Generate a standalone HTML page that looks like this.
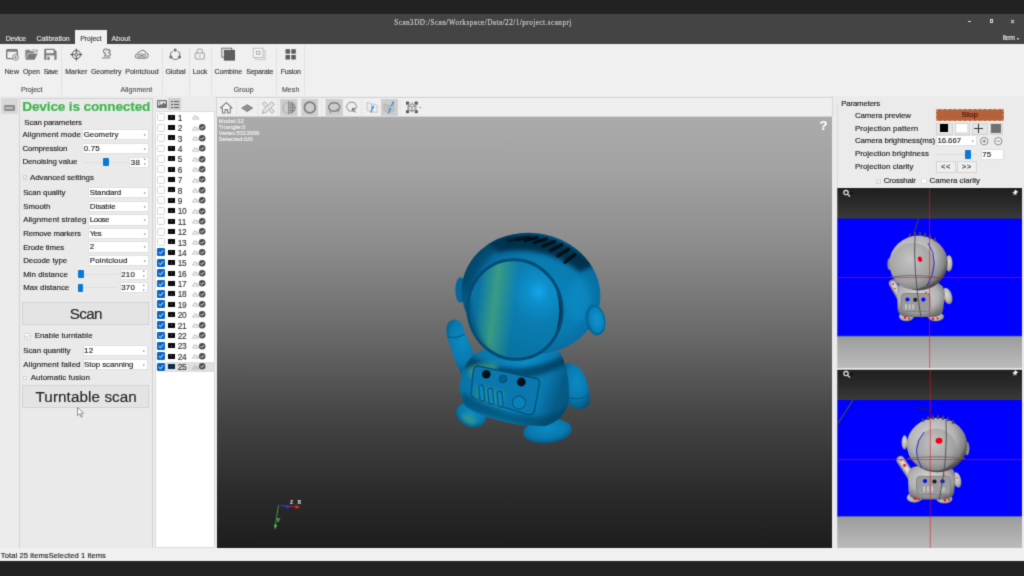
<!DOCTYPE html><html><head><meta charset="utf-8"><title>Scan3D</title><style>
html,body{margin:0;padding:0}
body{width:1024px;height:576px;position:relative;overflow:hidden;background:#ebebeb;font-family:"Liberation Sans",sans-serif;}
.t{position:absolute;white-space:nowrap;-webkit-text-stroke:0.14px;}
.b{position:absolute;box-sizing:border-box;}
.cb{background:#fff;border:1px solid #e0e0e0;}
.btn{background:#e4e4e4;border:1px solid #d2d2d2;}
svg{position:absolute;overflow:visible}
</style></head><body><svg width="0" height="0" style="position:absolute"><defs><filter id="soft" x="0" y="0" width="100%" height="100%" color-interpolation-filters="sRGB"><feConvolveMatrix order="3" kernelMatrix="0.0192 0.1001 0.0192 0.1001 0.5228 0.1001 0.0192 0.1001 0.0192" divisor="1" edgeMode="duplicate" preserveAlpha="true"/></filter></defs></svg><div class="b" style="left:-8px;top:-8px;width:1040px;height:592px;overflow:hidden;background:#ebebeb;filter:url(#soft)"><div class="b" style="left:8px;top:8px;width:1024px;height:576px">
<div class="b " style="left:-8px;top:-8px;width:1040px;height:22px;background:#222"></div>
<div class="b " style="left:-8px;top:14px;width:1040px;height:30.3px;background:#444"></div>
<div class="t " style="left:394.25px;top:19.4px;height:9.4px;line-height:9.4px;font-size:7.2px;color:#cfcfcf;font-family:'Liberation Serif',serif;letter-spacing:0.470px">Scan3DD:/Scan/Workspace/Data/22/1/project.scanprj</div>
<div class="b " style="left:968px;top:21.4px;width:3px;height:1px;background:#dcdcdc"></div>
<div class="b " style="left:989.5px;top:19px;width:3.6px;height:3.6px;border:1px solid #dcdcdc"></div>
<div class="t " style="left:1010.50px;top:16.9px;height:9.1px;line-height:9.1px;font-size:7px;color:#e8e8e8;">&#215;</div>
<div class="b " style="left:75px;top:30px;width:32px;height:15px;background:#f0f0f0"></div>
<div class="t " style="left:5.65px;top:33.5px;height:9.1px;line-height:9.1px;font-size:7px;color:#e6e6e6;letter-spacing:-0.165px">Device</div>
<div class="t " style="left:36.45px;top:33.5px;height:9.1px;line-height:9.1px;font-size:7px;color:#e6e6e6;letter-spacing:-0.026px">Calibration</div>
<div class="t " style="left:80.15px;top:33.5px;height:9.1px;line-height:9.1px;font-size:7px;color:#3a3a3a;letter-spacing:-0.046px">Project</div>
<div class="t " style="left:111.45px;top:33.5px;height:9.1px;line-height:9.1px;font-size:7px;color:#e6e6e6;letter-spacing:0.134px">About</div>
<div class="t " style="left:1002.65px;top:33.6px;height:8.8px;line-height:8.8px;font-size:6.8px;color:#e6e6e6;letter-spacing:-0.291px">Item</div>
<div class="t " style="left:1017.30px;top:35.9px;height:5.2px;line-height:5.2px;font-size:4px;color:#e6e6e6;">&#9662;</div>
<div class="b " style="left:-8px;top:44.3px;width:1040px;height:51.8px;background:#f0f0f0"></div>
<div class="b " style="left:61.3px;top:46px;width:0.9px;height:49px;background:#e2e2e2"></div>
<div class="b " style="left:162.2px;top:46px;width:0.9px;height:49px;background:#e2e2e2"></div>
<div class="b " style="left:189px;top:46px;width:0.9px;height:49px;background:#e2e2e2"></div>
<div class="b " style="left:210.5px;top:46px;width:0.9px;height:49px;background:#e2e2e2"></div>
<div class="b " style="left:276.4px;top:46px;width:0.9px;height:49px;background:#e2e2e2"></div>
<div class="b " style="left:304px;top:46px;width:0.9px;height:49px;background:#e2e2e2"></div>
<div class="t " style="left:4.65px;top:66.9px;height:9.1px;line-height:9.1px;font-size:7px;color:#383838;letter-spacing:0.174px">New</div>
<div class="t " style="left:22.90px;top:66.9px;height:9.1px;line-height:9.1px;font-size:7px;color:#383838;letter-spacing:-0.050px">Open</div>
<div class="t " style="left:43.65px;top:66.9px;height:9.1px;line-height:9.1px;font-size:7px;color:#383838;letter-spacing:-0.505px">Save</div>
<div class="t " style="left:65.15px;top:66.9px;height:9.1px;line-height:9.1px;font-size:7px;color:#383838;letter-spacing:0.076px">Marker</div>
<div class="t " style="left:90.90px;top:66.9px;height:9.1px;line-height:9.1px;font-size:7px;color:#383838;letter-spacing:-0.005px">Geometry</div>
<div class="t " style="left:125.15px;top:66.9px;height:9.1px;line-height:9.1px;font-size:7px;color:#383838;letter-spacing:0.079px">Pointcloud</div>
<div class="t " style="left:165.40px;top:66.9px;height:9.1px;line-height:9.1px;font-size:7px;color:#383838;letter-spacing:-0.034px">Global</div>
<div class="t " style="left:192.75px;top:66.9px;height:9.1px;line-height:9.1px;font-size:7px;color:#383838;letter-spacing:-0.056px">Lock</div>
<div class="t " style="left:214.45px;top:66.9px;height:9.1px;line-height:9.1px;font-size:7px;color:#383838;letter-spacing:-0.033px">Combine</div>
<div class="t " style="left:246.15px;top:66.9px;height:9.1px;line-height:9.1px;font-size:7px;color:#383838;letter-spacing:-0.176px">Separate</div>
<div class="t " style="left:280.65px;top:66.9px;height:9.1px;line-height:9.1px;font-size:7px;color:#383838;letter-spacing:-0.166px">Fusion</div>
<div class="t " style="left:20.90px;top:85.2px;height:9.1px;line-height:9.1px;font-size:7px;color:#505050;letter-spacing:-0.053px">Project</div>
<div class="t " style="left:120.40px;top:85.2px;height:9.1px;line-height:9.1px;font-size:7px;color:#505050;letter-spacing:0.095px">Alignment</div>
<div class="t " style="left:233.65px;top:85.2px;height:9.1px;line-height:9.1px;font-size:7px;color:#505050;letter-spacing:0.162px">Group</div>
<div class="t " style="left:281.90px;top:85.2px;height:9.1px;line-height:9.1px;font-size:7px;color:#505050;letter-spacing:0.093px">Mesh</div>
<svg style="left:0;top:0" width="320" height="96" viewBox="0 0 320 96">
<!-- New -->
<g fill="none" stroke="#7c7c7c">
<rect x="6.7" y="49.6" width="10.6" height="9" rx="1.2" stroke-width="1.4"/>
<path d="M6.7 50.6 h10.6" stroke-width="2.2"/>
</g>
<circle cx="15.6" cy="57.3" r="2.9" fill="#f0f0f0" stroke="#7c7c7c" stroke-width="0.9"/>
<path d="M14 57.3 h3.2 M15.6 55.7 v3.2" stroke="#7c7c7c" stroke-width="0.8"/>
<!-- Open -->
<path d="M25.3 59.6 V50.6 Q25.3 49.8 26.1 49.8 H29.6 L30.8 51.2 H34.2 V53 H28.2 L25.3 59.6Z" fill="#858585"/>
<path d="M28.6 53.6 H37.6 L34.6 59.8 H25.6Z" fill="#7a7a7a"/>
<path d="M31.5 50.2 Q34.8 48.4 37 51.4 M37.3 49.3 L37.1 51.7 L34.9 51.2" fill="none" stroke="#8a8a8a" stroke-width="0.8"/>
<!-- Save -->
<path d="M45.4 48.8 H54 L56.6 51.4 V58.8 Q56.6 60 55.4 60 H45.4 Q44.2 60 44.2 58.8 V50 Q44.2 48.8 45.4 48.8Z" fill="#7e7e7e"/>
<rect x="46.2" y="50" width="7.4" height="3.2" fill="#f0f0f0"/>
<rect x="46.4" y="55.4" width="8" height="4.6" fill="#f0f0f0"/>
<rect x="47.4" y="56.6" width="2.2" height="3.4" fill="#7e7e7e"/>
<!-- Marker -->
<g fill="none" stroke="#4a4a4a" stroke-width="0.95">
<circle cx="76.3" cy="54.6" r="4.2"/><circle cx="76.3" cy="54.6" r="1.5"/>
<path d="M76.3 48.6 V52.6 M76.3 56.6 V60.6 M70.3 54.6 H74.3 M78.3 54.6 H82.3"/>
</g>
<!-- Geometry -->
<path d="M104 49.6 L106.2 48.8 L107 50 L109.2 49.4 L110.2 51.4 L109 52.6 L110.6 54.2 L109.4 56 L104.6 56 L105.6 53.6 L103.4 52 Z" fill="none" stroke="#7a7a7a" stroke-width="1.1"/>
<path d="M102.2 57.6 L110.8 57.2 L109.6 58.4 L101.6 58.6Z" fill="#8a8a8a"/>
<path d="M107.6 52.6 l1.4 0.4" stroke="#8a8a8a" stroke-width="0.8"/>
<!-- Pointcloud -->
<g fill="none" stroke="#6e6e6e" stroke-width="0.95">
<path d="M137.6 58.2 Q135.2 58.2 135.3 55.9 Q135.5 54 137.6 53.9 Q137.9 51.6 140 51.7 Q141 50 143 50.2 Q145.3 50.6 145.6 52.8 Q148.3 52.9 148.3 55.6 Q148.2 58.2 145.8 58.2 Z"/>
<circle cx="139.3" cy="55.8" r="1.5"/><circle cx="144.2" cy="55.8" r="1.5"/><path d="M140.8 55.8 h1.9 M141 53.4 l1.6 1"/>
</g>
<!-- Global -->
<circle cx="175.2" cy="54.8" r="4.7" fill="none" stroke="#6a6a6a" stroke-width="0.95"/>
<g fill="#6a6a6a"><circle cx="175.2" cy="49.9" r="1.5"/><circle cx="170.9" cy="57" r="1.5"/><circle cx="179.5" cy="57" r="1.5"/></g>
<g fill="#f0f0f0"><rect x="172" y="49" width="1.6" height="2"/><rect x="176.8" y="49" width="1.6" height="2"/></g>
<!-- Lock -->
<g fill="none" stroke="#9a9a9a" stroke-width="0.95">
<rect x="195.2" y="53" width="9.2" height="6" rx="0.8"/>
<path d="M197 53 V51.2 Q197 48.9 199.8 48.9 Q202.6 48.9 202.6 51.2 V53"/>
<path d="M198.8 56 h2"/>
</g>
<!-- Combine -->
<rect x="221.8" y="48.2" width="10" height="9" fill="none" stroke="#6a6a6a" stroke-width="0.9"/>
<rect x="224.3" y="50.3" width="10.3" height="9.8" fill="#5e5e5e" stroke="#4a4a4a" stroke-width="0.8"/>
<!-- Separate -->
<rect x="255.6" y="50.6" width="9.6" height="9.2" fill="#e4e4e4" stroke="#c4c4c4" stroke-width="0.8"/>
<rect x="253.2" y="48.2" width="9.8" height="9.2" fill="#f4f4f4" stroke="#b4b4b4" stroke-width="0.8"/>
<rect x="256.6" y="51.3" width="3.4" height="3" fill="none" stroke="#9a9a9a" stroke-width="0.8"/>
<!-- Fusion -->
<g fill="#5c5c5c"><rect x="285.5" y="49.2" width="4.5" height="4.5"/><rect x="291.3" y="49.2" width="4.5" height="4.5"/><rect x="285.5" y="55" width="4.5" height="4.5"/><rect x="291.3" y="55" width="4.5" height="4.5"/></g>
</svg>

<div class="b " style="left:1px;top:98.2px;width:16.7px;height:16.3px;background:#d8d8d8"></div>
<div class="b " style="left:3.8px;top:104.8px;width:11.1px;height:5.9px;background:#8c8c8c;border-radius:1px"></div>
<div class="b " style="left:5.2px;top:107.2px;width:8.3px;height:1.6px;background:#bdbdbd"></div>
<div class="b " style="left:19px;top:98.2px;width:134px;height:450.4px;border:1px solid #d2d2d2;background:#eaeaea"></div>
<div class="t " style="left:22.25px;top:98.1px;height:17px;line-height:17px;font-size:13.7px;color:#3eb54c;font-weight:bold;letter-spacing:-0.190px">Device is connected</div>
<div class="t " style="left:24.35px;top:118.2px;height:10.3px;line-height:10.3px;font-size:7.9px;color:#1c1c1c;letter-spacing:-0.172px">Scan parameters</div>
<div class="t " style="left:22.45px;top:130.3px;height:10.3px;line-height:10.3px;font-size:7.9px;color:#1c1c1c;letter-spacing:0.109px">Alignment mode</div>
<div class="b cb" style="left:82.2px;top:129.3px;width:66.8px;height:11.1px;"></div><div class="t " style="left:83.65px;top:130.2px;height:10.3px;line-height:10.3px;font-size:7.9px;color:#1c1c1c;letter-spacing:0.006px">Geometry</div><div class="t " style="left:143.80px;top:133.1px;height:4.4px;line-height:4.4px;font-size:3.4px;color:#777;">&#9662;</div>
<div class="t " style="left:22.45px;top:143.9px;height:10.3px;line-height:10.3px;font-size:7.9px;color:#1c1c1c;letter-spacing:-0.162px">Compression</div>
<div class="b cb" style="left:82.2px;top:142.8px;width:66.8px;height:11.1px;"></div><div class="t " style="left:83.65px;top:143.7px;height:10.3px;line-height:10.3px;font-size:7.9px;color:#1c1c1c;letter-spacing:0.240px">0.75</div><div class="t " style="left:143.80px;top:146.6px;height:4.4px;line-height:4.4px;font-size:3.4px;color:#777;">&#9662;</div>
<div class="t " style="left:22.45px;top:157.2px;height:10.3px;line-height:10.3px;font-size:7.9px;color:#1c1c1c;letter-spacing:-0.087px">Denoising value</div>
<div class="b " style="left:83px;top:161.7px;width:44.5px;height:1px;background:#dfdfdf"></div><div class="b " style="left:103.4px;top:158.0px;width:5.8px;height:8.4px;background:#0b78d6;border-radius:1px"></div>
<div class="b cb" style="left:129.4px;top:156.7px;width:19.9px;height:11.3px;"></div><div class="t " style="left:130.85px;top:157.7px;height:10.3px;line-height:10.3px;font-size:7.9px;color:#1c1c1c;letter-spacing:0.346px">38</div><div class="t " style="left:144.30px;top:158.1px;height:3.6px;line-height:3.6px;font-size:2.8px;color:#777;">&#9652;</div><div class="t " style="left:144.30px;top:163.1px;height:3.6px;line-height:3.6px;font-size:2.8px;color:#777;">&#9662;</div>
<div class="b " style="left:22.5px;top:175.1px;width:4.6px;height:4.6px;background:#fafafa;border:1px solid #d2d2d2;border-radius:0.6px"></div><svg style="left:22.5px;top:175.1px" width="4.6" height="4.6" viewBox="0 0 10 10"><path d="M2.4 5.2 L4.3 7 L7.6 3.2" stroke="#a8a8a8" stroke-width="1.1" fill="none"/></svg>
<div class="t " style="left:29.95px;top:172.6px;height:10.3px;line-height:10.3px;font-size:7.9px;color:#1c1c1c;letter-spacing:-0.035px">Advanced settings</div>
<div class="t " style="left:23.15px;top:188.2px;height:10.3px;line-height:10.3px;font-size:7.9px;color:#1c1c1c;letter-spacing:-0.052px">Scan quality</div>
<div class="b cb" style="left:88.4px;top:187px;width:60.3px;height:11.2px;"></div><div class="t " style="left:89.85px;top:187.9px;height:10.3px;line-height:10.3px;font-size:7.9px;color:#1c1c1c;letter-spacing:-0.098px">Standard</div><div class="t " style="left:143.50px;top:190.8px;height:4.4px;line-height:4.4px;font-size:3.4px;color:#777;">&#9662;</div>
<div class="t " style="left:23.15px;top:201.8px;height:10.3px;line-height:10.3px;font-size:7.9px;color:#1c1c1c;letter-spacing:0.018px">Smooth</div>
<div class="b cb" style="left:88.4px;top:200.7px;width:60.3px;height:11.2px;"></div><div class="t " style="left:89.85px;top:201.6px;height:10.3px;line-height:10.3px;font-size:7.9px;color:#1c1c1c;letter-spacing:-0.081px">Disable</div><div class="t " style="left:143.50px;top:204.5px;height:4.4px;line-height:4.4px;font-size:3.4px;color:#777;">&#9662;</div>
<div class="t " style="left:23.15px;top:215.4px;height:10.3px;line-height:10.3px;font-size:7.9px;color:#1c1c1c;letter-spacing:0.109px">Alignment strateg</div>
<div class="b cb" style="left:88.4px;top:214.4px;width:60.3px;height:11.2px;"></div><div class="t " style="left:89.85px;top:215.3px;height:10.3px;line-height:10.3px;font-size:7.9px;color:#1c1c1c;letter-spacing:-0.467px">Loose</div><div class="t " style="left:143.50px;top:218.2px;height:4.4px;line-height:4.4px;font-size:3.4px;color:#777;">&#9662;</div>
<div class="t " style="left:23.15px;top:228.9px;height:10.3px;line-height:10.3px;font-size:7.9px;color:#1c1c1c;letter-spacing:-0.176px">Remove markers</div>
<div class="b cb" style="left:88.4px;top:227.8px;width:60.3px;height:11.2px;"></div><div class="t " style="left:89.85px;top:228.8px;height:10.3px;line-height:10.3px;font-size:7.9px;color:#1c1c1c;letter-spacing:-0.510px">Yes</div><div class="t " style="left:143.50px;top:231.6px;height:4.4px;line-height:4.4px;font-size:3.4px;color:#777;">&#9662;</div>
<div class="t " style="left:23.15px;top:242.6px;height:10.3px;line-height:10.3px;font-size:7.9px;color:#1c1c1c;letter-spacing:-0.106px">Erode times</div>
<div class="b cb" style="left:88.4px;top:241.4px;width:60.3px;height:11.2px;"></div><div class="t " style="left:89.85px;top:242.3px;height:10.3px;line-height:10.3px;font-size:7.9px;color:#1c1c1c;letter-spacing:0.309px">2</div><div class="t " style="left:143.50px;top:245.2px;height:4.4px;line-height:4.4px;font-size:3.4px;color:#777;">&#9662;</div>
<div class="t " style="left:23.15px;top:256.1px;height:10.3px;line-height:10.3px;font-size:7.9px;color:#1c1c1c;letter-spacing:-0.020px">Decode type</div>
<div class="b cb" style="left:88.4px;top:255.1px;width:60.3px;height:11.2px;"></div><div class="t " style="left:89.85px;top:256.1px;height:10.3px;line-height:10.3px;font-size:7.9px;color:#1c1c1c;letter-spacing:0.067px">Pointcloud</div><div class="t " style="left:143.50px;top:258.9px;height:4.4px;line-height:4.4px;font-size:3.4px;color:#777;">&#9662;</div>
<div class="t " style="left:23.15px;top:269.8px;height:10.3px;line-height:10.3px;font-size:7.9px;color:#1c1c1c;letter-spacing:0.035px">Min distance</div>
<div class="b " style="left:76px;top:273.8px;width:42px;height:1px;background:#dfdfdf"></div><div class="b " style="left:78.4px;top:270.1px;width:5.8px;height:8.4px;background:#0b78d6;border-radius:1px"></div>
<div class="b cb" style="left:119.9px;top:268.8px;width:28.4px;height:11.2px;"></div><div class="t " style="left:121.35px;top:269.8px;height:10.3px;line-height:10.3px;font-size:7.9px;color:#1c1c1c;letter-spacing:0.131px">210</div><div class="t " style="left:143.30px;top:270.2px;height:3.6px;line-height:3.6px;font-size:2.8px;color:#777;">&#9652;</div><div class="t " style="left:143.30px;top:275.2px;height:3.6px;line-height:3.6px;font-size:2.8px;color:#777;">&#9662;</div>
<div class="t " style="left:23.15px;top:283.1px;height:10.3px;line-height:10.3px;font-size:7.9px;color:#1c1c1c;letter-spacing:-0.035px">Max distance</div>
<div class="b " style="left:76px;top:287.3px;width:42px;height:1px;background:#dfdfdf"></div><div class="b " style="left:77.5px;top:283.6px;width:5.8px;height:8.4px;background:#0b78d6;border-radius:1px"></div>
<div class="b cb" style="left:119.9px;top:282.3px;width:28.4px;height:11.2px;"></div><div class="t " style="left:121.35px;top:283.3px;height:10.3px;line-height:10.3px;font-size:7.9px;color:#1c1c1c;letter-spacing:0.131px">370</div><div class="t " style="left:143.30px;top:283.7px;height:3.6px;line-height:3.6px;font-size:2.8px;color:#777;">&#9652;</div><div class="t " style="left:143.30px;top:288.7px;height:3.6px;line-height:3.6px;font-size:2.8px;color:#777;">&#9662;</div>
<div class="b btn" style="left:22.1px;top:302.2px;width:127.4px;height:22.6px;"></div>
<div class="t " style="left:69.85px;top:303.9px;height:20px;line-height:20px;font-size:15.2px;color:#222;letter-spacing:-0.693px">Scan</div>
<div class="b " style="left:24.2px;top:332.7px;width:7px;height:7px;background:#fafafa;border:1px solid #d2d2d2;border-radius:1.5px"></div><svg style="left:24.2px;top:332.7px" width="7" height="7" viewBox="0 0 10 10"><path d="M2.4 5.2 L4.3 7 L7.6 3.2" stroke="#a8a8a8" stroke-width="1.1" fill="none"/></svg>
<div class="t " style="left:34.65px;top:331.2px;height:10.3px;line-height:10.3px;font-size:7.9px;color:#1c1c1c;letter-spacing:0.027px">Enable turntable</div>
<div class="t " style="left:23.25px;top:345.9px;height:10.3px;line-height:10.3px;font-size:7.9px;color:#1c1c1c;letter-spacing:-0.050px">Scan quantity</div>
<div class="b cb" style="left:82.6px;top:344.8px;width:65.8px;height:11.2px;"></div><div class="t " style="left:84.05px;top:345.8px;height:10.3px;line-height:10.3px;font-size:7.9px;color:#1c1c1c;letter-spacing:0.346px">12</div><div class="t " style="left:143.20px;top:348.6px;height:4.4px;line-height:4.4px;font-size:3.4px;color:#777;">&#9662;</div>
<div class="t " style="left:23.25px;top:359.6px;height:10.3px;line-height:10.3px;font-size:7.9px;color:#1c1c1c;letter-spacing:0.074px">Alignment failed</div>
<div class="b cb" style="left:82.6px;top:358.7px;width:65.8px;height:11.2px;"></div><div class="t " style="left:84.05px;top:359.7px;height:10.3px;line-height:10.3px;font-size:7.9px;color:#1c1c1c;letter-spacing:-0.057px">Stop scanning</div><div class="t " style="left:143.20px;top:362.5px;height:4.4px;line-height:4.4px;font-size:3.4px;color:#777;">&#9662;</div>
<div class="b " style="left:22.8px;top:376.1px;width:4.4px;height:4.4px;background:#fafafa;border:1px solid #d2d2d2;border-radius:0.6px"></div>
<div class="t " style="left:30.65px;top:373.4px;height:10.3px;line-height:10.3px;font-size:7.9px;color:#1c1c1c;letter-spacing:0.062px">Automatic fusion</div>
<div class="b btn" style="left:22.2px;top:385.1px;width:127.3px;height:23px;"></div>
<div class="t " style="left:35.55px;top:386.8px;height:20px;line-height:20px;font-size:15.2px;color:#222;letter-spacing:0.103px">Turntable scan</div>
<svg style="left:77px;top:407.2px" width="8" height="11" viewBox="0 0 8 11"><path d="M0.5 0.5 L0.5 8.5 L2.6 6.8 L4.2 10.2 L5.4 9.6 L3.9 6.4 L6.6 6.2 Z" fill="#fff" stroke="#666" stroke-width="0.7"/></svg>
<div class="b " style="left:156.8px;top:100.1px;width:10.1px;height:7.9px;background:#6c6c6c;border-radius:1.2px"></div>
<svg style="left:0;top:0" width="200" height="120" viewBox="0 0 200 120"><path d="M158 101.3 H165.7 V104.3 L163.4 102.6 L161.4 105 L160.2 104 L158 106Z" fill="#eeeeee"/><circle cx="159.6" cy="102.7" r="0.8" fill="#4a5a6a"/></svg>
<div class="b " style="left:168.3px;top:97.9px;width:13px;height:11.9px;background:#cecece"></div>
<div class="b " style="left:170.8px;top:100.5px;width:2.2px;height:1.5px;background:#5a5a5a"></div>
<div class="b " style="left:174.2px;top:100.5px;width:5.1px;height:1.5px;background:#5a5a5a"></div>
<div class="b " style="left:170.8px;top:103.6px;width:2.2px;height:1.5px;background:#5a5a5a"></div>
<div class="b " style="left:174.2px;top:103.6px;width:5.1px;height:1.5px;background:#5a5a5a"></div>
<div class="b " style="left:170.8px;top:106.7px;width:2.2px;height:1.5px;background:#5a5a5a"></div>
<div class="b " style="left:174.2px;top:106.7px;width:5.1px;height:1.5px;background:#5a5a5a"></div>
<div class="b " style="left:155.3px;top:111px;width:59.5px;height:437px;background:#fff;border:1px solid #dcdcdc"></div>
<div class="b " style="left:157.4px;top:113.35px;width:7.9px;height:7.9px;background:#fdfdfd;border:1px solid #d6d6d6;border-radius:1.5px"></div>
<div class="b " style="left:167.8px;top:114.7px;width:7.1px;height:5px;background:#0a0a0a"></div>
<div class="b " style="left:170.9px;top:116.3px;width:1.4px;height:1.8px;background:#4a4a4a"></div>
<div class="t " style="left:177.85px;top:112.8px;height:10.8px;line-height:10.8px;font-size:8.3px;color:#333;letter-spacing:-0.325px">1</div>
<svg style="left:192px;top:114.3px" width="7.4" height="5.6" viewBox="0 0 16 12"><path d="M1 11 L6 3 L9 8 L11 5 L15 11 Z" fill="none" stroke="#a4a4a4" stroke-width="1.5"/></svg>
<div class="b " style="left:157.4px;top:123.74px;width:7.9px;height:7.9px;background:#fdfdfd;border:1px solid #d6d6d6;border-radius:1.5px"></div>
<div class="b " style="left:167.8px;top:125.09px;width:7.1px;height:5px;background:#0a0a0a"></div>
<div class="b " style="left:170.9px;top:126.69px;width:1.4px;height:1.8px;background:#4a4a4a"></div>
<div class="t " style="left:177.85px;top:123.2px;height:10.8px;line-height:10.8px;font-size:8.3px;color:#333;letter-spacing:-0.325px">2</div>
<svg style="left:192px;top:124.7px" width="7.4" height="5.6" viewBox="0 0 16 12"><path d="M1 11 L6 3 L9 8 L11 5 L15 11 Z" fill="none" stroke="#a4a4a4" stroke-width="1.5"/></svg>
<svg style="left:199.3px;top:124.4px" width="6.4" height="6.4" viewBox="0 0 12 12"><circle cx="6" cy="6" r="6" fill="#4a4a4a"/><path d="M3 6.2 L5.2 8.4 L9 4" stroke="#fff" stroke-width="1.7" fill="none"/></svg>
<div class="b " style="left:157.4px;top:134.13px;width:7.9px;height:7.9px;background:#fdfdfd;border:1px solid #d6d6d6;border-radius:1.5px"></div>
<div class="b " style="left:167.8px;top:135.48px;width:7.1px;height:5px;background:#0a0a0a"></div>
<div class="b " style="left:170.9px;top:137.07999999999998px;width:1.4px;height:1.8px;background:#4a4a4a"></div>
<div class="t " style="left:177.85px;top:133.6px;height:10.8px;line-height:10.8px;font-size:8.3px;color:#333;letter-spacing:-0.325px">3</div>
<svg style="left:192px;top:135.1px" width="7.4" height="5.6" viewBox="0 0 16 12"><path d="M1 11 L6 3 L9 8 L11 5 L15 11 Z" fill="none" stroke="#a4a4a4" stroke-width="1.5"/></svg>
<svg style="left:199.3px;top:134.8px" width="6.4" height="6.4" viewBox="0 0 12 12"><circle cx="6" cy="6" r="6" fill="#4a4a4a"/><path d="M3 6.2 L5.2 8.4 L9 4" stroke="#fff" stroke-width="1.7" fill="none"/></svg>
<div class="b " style="left:157.4px;top:144.52px;width:7.9px;height:7.9px;background:#fdfdfd;border:1px solid #d6d6d6;border-radius:1.5px"></div>
<div class="b " style="left:167.8px;top:145.87px;width:7.1px;height:5px;background:#0a0a0a"></div>
<div class="b " style="left:170.9px;top:147.47px;width:1.4px;height:1.8px;background:#4a4a4a"></div>
<div class="t " style="left:177.85px;top:144.0px;height:10.8px;line-height:10.8px;font-size:8.3px;color:#333;letter-spacing:-0.325px">4</div>
<svg style="left:192px;top:145.5px" width="7.4" height="5.6" viewBox="0 0 16 12"><path d="M1 11 L6 3 L9 8 L11 5 L15 11 Z" fill="none" stroke="#a4a4a4" stroke-width="1.5"/></svg>
<svg style="left:199.3px;top:145.2px" width="6.4" height="6.4" viewBox="0 0 12 12"><circle cx="6" cy="6" r="6" fill="#4a4a4a"/><path d="M3 6.2 L5.2 8.4 L9 4" stroke="#fff" stroke-width="1.7" fill="none"/></svg>
<div class="b " style="left:157.4px;top:154.91000000000003px;width:7.9px;height:7.9px;background:#fdfdfd;border:1px solid #d6d6d6;border-radius:1.5px"></div>
<div class="b " style="left:167.8px;top:156.26000000000002px;width:7.1px;height:5px;background:#0a0a0a"></div>
<div class="b " style="left:170.9px;top:157.86px;width:1.4px;height:1.8px;background:#4a4a4a"></div>
<div class="t " style="left:177.85px;top:154.4px;height:10.8px;line-height:10.8px;font-size:8.3px;color:#333;letter-spacing:-0.325px">5</div>
<svg style="left:192px;top:155.9px" width="7.4" height="5.6" viewBox="0 0 16 12"><path d="M1 11 L6 3 L9 8 L11 5 L15 11 Z" fill="none" stroke="#a4a4a4" stroke-width="1.5"/></svg>
<svg style="left:199.3px;top:155.6px" width="6.4" height="6.4" viewBox="0 0 12 12"><circle cx="6" cy="6" r="6" fill="#4a4a4a"/><path d="M3 6.2 L5.2 8.4 L9 4" stroke="#fff" stroke-width="1.7" fill="none"/></svg>
<div class="b " style="left:157.4px;top:165.3px;width:7.9px;height:7.9px;background:#fdfdfd;border:1px solid #d6d6d6;border-radius:1.5px"></div>
<div class="b " style="left:167.8px;top:166.65px;width:7.1px;height:5px;background:#0a0a0a"></div>
<div class="b " style="left:170.9px;top:168.25px;width:1.4px;height:1.8px;background:#4a4a4a"></div>
<div class="t " style="left:177.85px;top:164.8px;height:10.8px;line-height:10.8px;font-size:8.3px;color:#333;letter-spacing:-0.325px">6</div>
<svg style="left:192px;top:166.2px" width="7.4" height="5.6" viewBox="0 0 16 12"><path d="M1 11 L6 3 L9 8 L11 5 L15 11 Z" fill="none" stroke="#a4a4a4" stroke-width="1.5"/></svg>
<svg style="left:199.3px;top:165.9px" width="6.4" height="6.4" viewBox="0 0 12 12"><circle cx="6" cy="6" r="6" fill="#4a4a4a"/><path d="M3 6.2 L5.2 8.4 L9 4" stroke="#fff" stroke-width="1.7" fill="none"/></svg>
<div class="b " style="left:157.4px;top:175.69px;width:7.9px;height:7.9px;background:#fdfdfd;border:1px solid #d6d6d6;border-radius:1.5px"></div>
<div class="b " style="left:167.8px;top:177.04px;width:7.1px;height:5px;background:#0a0a0a"></div>
<div class="b " style="left:170.9px;top:178.64px;width:1.4px;height:1.8px;background:#4a4a4a"></div>
<div class="t " style="left:177.85px;top:175.1px;height:10.8px;line-height:10.8px;font-size:8.3px;color:#333;letter-spacing:-0.325px">7</div>
<svg style="left:192px;top:176.6px" width="7.4" height="5.6" viewBox="0 0 16 12"><path d="M1 11 L6 3 L9 8 L11 5 L15 11 Z" fill="none" stroke="#a4a4a4" stroke-width="1.5"/></svg>
<svg style="left:199.3px;top:176.3px" width="6.4" height="6.4" viewBox="0 0 12 12"><circle cx="6" cy="6" r="6" fill="#4a4a4a"/><path d="M3 6.2 L5.2 8.4 L9 4" stroke="#fff" stroke-width="1.7" fill="none"/></svg>
<div class="b " style="left:157.4px;top:186.08px;width:7.9px;height:7.9px;background:#fdfdfd;border:1px solid #d6d6d6;border-radius:1.5px"></div>
<div class="b " style="left:167.8px;top:187.43px;width:7.1px;height:5px;background:#0a0a0a"></div>
<div class="b " style="left:170.9px;top:189.03px;width:1.4px;height:1.8px;background:#4a4a4a"></div>
<div class="t " style="left:177.85px;top:185.5px;height:10.8px;line-height:10.8px;font-size:8.3px;color:#333;letter-spacing:-0.325px">8</div>
<svg style="left:192px;top:187.0px" width="7.4" height="5.6" viewBox="0 0 16 12"><path d="M1 11 L6 3 L9 8 L11 5 L15 11 Z" fill="none" stroke="#a4a4a4" stroke-width="1.5"/></svg>
<svg style="left:199.3px;top:186.7px" width="6.4" height="6.4" viewBox="0 0 12 12"><circle cx="6" cy="6" r="6" fill="#4a4a4a"/><path d="M3 6.2 L5.2 8.4 L9 4" stroke="#fff" stroke-width="1.7" fill="none"/></svg>
<div class="b " style="left:157.4px;top:196.47000000000003px;width:7.9px;height:7.9px;background:#fdfdfd;border:1px solid #d6d6d6;border-radius:1.5px"></div>
<div class="b " style="left:167.8px;top:197.82000000000002px;width:7.1px;height:5px;background:#0a0a0a"></div>
<div class="b " style="left:170.9px;top:199.42000000000002px;width:1.4px;height:1.8px;background:#4a4a4a"></div>
<div class="t " style="left:177.85px;top:195.9px;height:10.8px;line-height:10.8px;font-size:8.3px;color:#333;letter-spacing:-0.325px">9</div>
<svg style="left:192px;top:197.4px" width="7.4" height="5.6" viewBox="0 0 16 12"><path d="M1 11 L6 3 L9 8 L11 5 L15 11 Z" fill="none" stroke="#a4a4a4" stroke-width="1.5"/></svg>
<svg style="left:199.3px;top:197.1px" width="6.4" height="6.4" viewBox="0 0 12 12"><circle cx="6" cy="6" r="6" fill="#4a4a4a"/><path d="M3 6.2 L5.2 8.4 L9 4" stroke="#fff" stroke-width="1.7" fill="none"/></svg>
<div class="b " style="left:157.4px;top:206.86px;width:7.9px;height:7.9px;background:#fdfdfd;border:1px solid #d6d6d6;border-radius:1.5px"></div>
<div class="b " style="left:167.8px;top:208.21px;width:7.1px;height:5px;background:#0a0a0a"></div>
<div class="b " style="left:170.9px;top:209.81px;width:1.4px;height:1.8px;background:#4a4a4a"></div>
<div class="t " style="left:177.85px;top:206.3px;height:10.8px;line-height:10.8px;font-size:8.3px;color:#333;letter-spacing:-0.556px">10</div>
<svg style="left:192px;top:207.8px" width="7.4" height="5.6" viewBox="0 0 16 12"><path d="M1 11 L6 3 L9 8 L11 5 L15 11 Z" fill="none" stroke="#a4a4a4" stroke-width="1.5"/></svg>
<svg style="left:199.3px;top:207.5px" width="6.4" height="6.4" viewBox="0 0 12 12"><circle cx="6" cy="6" r="6" fill="#4a4a4a"/><path d="M3 6.2 L5.2 8.4 L9 4" stroke="#fff" stroke-width="1.7" fill="none"/></svg>
<div class="b " style="left:157.4px;top:217.25px;width:7.9px;height:7.9px;background:#fdfdfd;border:1px solid #d6d6d6;border-radius:1.5px"></div>
<div class="b " style="left:167.8px;top:218.6px;width:7.1px;height:5px;background:#0a0a0a"></div>
<div class="b " style="left:170.9px;top:220.2px;width:1.4px;height:1.8px;background:#4a4a4a"></div>
<div class="t " style="left:177.85px;top:216.7px;height:10.8px;line-height:10.8px;font-size:8.3px;color:#333;letter-spacing:-0.150px">11</div>
<svg style="left:192px;top:218.2px" width="7.4" height="5.6" viewBox="0 0 16 12"><path d="M1 11 L6 3 L9 8 L11 5 L15 11 Z" fill="none" stroke="#a4a4a4" stroke-width="1.5"/></svg>
<svg style="left:199.3px;top:217.9px" width="6.4" height="6.4" viewBox="0 0 12 12"><circle cx="6" cy="6" r="6" fill="#4a4a4a"/><path d="M3 6.2 L5.2 8.4 L9 4" stroke="#fff" stroke-width="1.7" fill="none"/></svg>
<div class="b " style="left:157.4px;top:227.64000000000001px;width:7.9px;height:7.9px;background:#fdfdfd;border:1px solid #d6d6d6;border-radius:1.5px"></div>
<div class="b " style="left:167.8px;top:228.99px;width:7.1px;height:5px;background:#0a0a0a"></div>
<div class="b " style="left:170.9px;top:230.59px;width:1.4px;height:1.8px;background:#4a4a4a"></div>
<div class="t " style="left:177.85px;top:227.1px;height:10.8px;line-height:10.8px;font-size:8.3px;color:#333;letter-spacing:-0.556px">12</div>
<svg style="left:192px;top:228.6px" width="7.4" height="5.6" viewBox="0 0 16 12"><path d="M1 11 L6 3 L9 8 L11 5 L15 11 Z" fill="none" stroke="#a4a4a4" stroke-width="1.5"/></svg>
<svg style="left:199.3px;top:228.3px" width="6.4" height="6.4" viewBox="0 0 12 12"><circle cx="6" cy="6" r="6" fill="#4a4a4a"/><path d="M3 6.2 L5.2 8.4 L9 4" stroke="#fff" stroke-width="1.7" fill="none"/></svg>
<div class="b " style="left:157.4px;top:238.03000000000003px;width:7.9px;height:7.9px;background:#fdfdfd;border:1px solid #d6d6d6;border-radius:1.5px"></div>
<div class="b " style="left:167.8px;top:239.38000000000002px;width:7.1px;height:5px;background:#0a0a0a"></div>
<div class="b " style="left:170.9px;top:240.98000000000002px;width:1.4px;height:1.8px;background:#4a4a4a"></div>
<div class="t " style="left:177.85px;top:237.5px;height:10.8px;line-height:10.8px;font-size:8.3px;color:#333;letter-spacing:-0.556px">13</div>
<svg style="left:192px;top:239.0px" width="7.4" height="5.6" viewBox="0 0 16 12"><path d="M1 11 L6 3 L9 8 L11 5 L15 11 Z" fill="none" stroke="#a4a4a4" stroke-width="1.5"/></svg>
<svg style="left:199.3px;top:238.7px" width="6.4" height="6.4" viewBox="0 0 12 12"><circle cx="6" cy="6" r="6" fill="#4a4a4a"/><path d="M3 6.2 L5.2 8.4 L9 4" stroke="#fff" stroke-width="1.7" fill="none"/></svg>
<div class="b " style="left:157.4px;top:248.42000000000002px;width:7.9px;height:7.9px;background:#0b64c4;border-radius:1.2px"></div><svg style="left:157.4px;top:248.42000000000002px" width="7.9" height="7.9" viewBox="0 0 10 10"><path d="M2.2 5.2 L4.3 7.2 L7.9 3" stroke="#fff" stroke-width="1.2" fill="none"/></svg>
<div class="b " style="left:167.8px;top:249.77px;width:7.1px;height:5px;background:#0a0a0a"></div>
<div class="b " style="left:170.9px;top:251.37px;width:1.4px;height:1.8px;background:#4a4a4a"></div>
<div class="t " style="left:177.85px;top:247.9px;height:10.8px;line-height:10.8px;font-size:8.3px;color:#333;letter-spacing:-0.556px">14</div>
<svg style="left:192px;top:249.4px" width="7.4" height="5.6" viewBox="0 0 16 12"><path d="M1 11 L6 3 L9 8 L11 5 L15 11 Z" fill="none" stroke="#a4a4a4" stroke-width="1.5"/></svg>
<svg style="left:199.3px;top:249.1px" width="6.4" height="6.4" viewBox="0 0 12 12"><circle cx="6" cy="6" r="6" fill="#4a4a4a"/><path d="M3 6.2 L5.2 8.4 L9 4" stroke="#fff" stroke-width="1.7" fill="none"/></svg>
<div class="b " style="left:157.4px;top:258.81px;width:7.9px;height:7.9px;background:#0b64c4;border-radius:1.2px"></div><svg style="left:157.4px;top:258.81px" width="7.9" height="7.9" viewBox="0 0 10 10"><path d="M2.2 5.2 L4.3 7.2 L7.9 3" stroke="#fff" stroke-width="1.2" fill="none"/></svg>
<div class="b " style="left:167.8px;top:260.15999999999997px;width:7.1px;height:5px;background:#0a0a0a"></div>
<div class="b " style="left:170.9px;top:261.76px;width:1.4px;height:1.8px;background:#4a4a4a"></div>
<div class="t " style="left:177.85px;top:258.3px;height:10.8px;line-height:10.8px;font-size:8.3px;color:#333;letter-spacing:-0.556px">15</div>
<svg style="left:192px;top:259.8px" width="7.4" height="5.6" viewBox="0 0 16 12"><path d="M1 11 L6 3 L9 8 L11 5 L15 11 Z" fill="none" stroke="#a4a4a4" stroke-width="1.5"/></svg>
<svg style="left:199.3px;top:259.5px" width="6.4" height="6.4" viewBox="0 0 12 12"><circle cx="6" cy="6" r="6" fill="#4a4a4a"/><path d="M3 6.2 L5.2 8.4 L9 4" stroke="#fff" stroke-width="1.7" fill="none"/></svg>
<div class="b " style="left:157.4px;top:269.20000000000005px;width:7.9px;height:7.9px;background:#0b64c4;border-radius:1.2px"></div><svg style="left:157.4px;top:269.20000000000005px" width="7.9" height="7.9" viewBox="0 0 10 10"><path d="M2.2 5.2 L4.3 7.2 L7.9 3" stroke="#fff" stroke-width="1.2" fill="none"/></svg>
<div class="b " style="left:167.8px;top:270.55px;width:7.1px;height:5px;background:#0a0a0a"></div>
<div class="b " style="left:170.9px;top:272.15000000000003px;width:1.4px;height:1.8px;background:#4a4a4a"></div>
<div class="t " style="left:177.85px;top:268.7px;height:10.8px;line-height:10.8px;font-size:8.3px;color:#333;letter-spacing:-0.556px">16</div>
<svg style="left:192px;top:270.2px" width="7.4" height="5.6" viewBox="0 0 16 12"><path d="M1 11 L6 3 L9 8 L11 5 L15 11 Z" fill="none" stroke="#a4a4a4" stroke-width="1.5"/></svg>
<svg style="left:199.3px;top:269.9px" width="6.4" height="6.4" viewBox="0 0 12 12"><circle cx="6" cy="6" r="6" fill="#4a4a4a"/><path d="M3 6.2 L5.2 8.4 L9 4" stroke="#fff" stroke-width="1.7" fill="none"/></svg>
<div class="b " style="left:157.4px;top:279.59000000000003px;width:7.9px;height:7.9px;background:#0b64c4;border-radius:1.2px"></div><svg style="left:157.4px;top:279.59000000000003px" width="7.9" height="7.9" viewBox="0 0 10 10"><path d="M2.2 5.2 L4.3 7.2 L7.9 3" stroke="#fff" stroke-width="1.2" fill="none"/></svg>
<div class="b " style="left:167.8px;top:280.94px;width:7.1px;height:5px;background:#0a0a0a"></div>
<div class="b " style="left:170.9px;top:282.54px;width:1.4px;height:1.8px;background:#4a4a4a"></div>
<div class="t " style="left:177.85px;top:279.0px;height:10.8px;line-height:10.8px;font-size:8.3px;color:#333;letter-spacing:-0.556px">17</div>
<svg style="left:192px;top:280.5px" width="7.4" height="5.6" viewBox="0 0 16 12"><path d="M1 11 L6 3 L9 8 L11 5 L15 11 Z" fill="none" stroke="#a4a4a4" stroke-width="1.5"/></svg>
<svg style="left:199.3px;top:280.2px" width="6.4" height="6.4" viewBox="0 0 12 12"><circle cx="6" cy="6" r="6" fill="#4a4a4a"/><path d="M3 6.2 L5.2 8.4 L9 4" stroke="#fff" stroke-width="1.7" fill="none"/></svg>
<div class="b " style="left:157.4px;top:289.98px;width:7.9px;height:7.9px;background:#0b64c4;border-radius:1.2px"></div><svg style="left:157.4px;top:289.98px" width="7.9" height="7.9" viewBox="0 0 10 10"><path d="M2.2 5.2 L4.3 7.2 L7.9 3" stroke="#fff" stroke-width="1.2" fill="none"/></svg>
<div class="b " style="left:167.8px;top:291.33px;width:7.1px;height:5px;background:#0a0a0a"></div>
<div class="b " style="left:170.9px;top:292.93px;width:1.4px;height:1.8px;background:#4a4a4a"></div>
<div class="t " style="left:177.85px;top:289.4px;height:10.8px;line-height:10.8px;font-size:8.3px;color:#333;letter-spacing:-0.556px">18</div>
<svg style="left:192px;top:290.9px" width="7.4" height="5.6" viewBox="0 0 16 12"><path d="M1 11 L6 3 L9 8 L11 5 L15 11 Z" fill="none" stroke="#a4a4a4" stroke-width="1.5"/></svg>
<svg style="left:199.3px;top:290.6px" width="6.4" height="6.4" viewBox="0 0 12 12"><circle cx="6" cy="6" r="6" fill="#4a4a4a"/><path d="M3 6.2 L5.2 8.4 L9 4" stroke="#fff" stroke-width="1.7" fill="none"/></svg>
<div class="b " style="left:157.4px;top:300.37px;width:7.9px;height:7.9px;background:#0b64c4;border-radius:1.2px"></div><svg style="left:157.4px;top:300.37px" width="7.9" height="7.9" viewBox="0 0 10 10"><path d="M2.2 5.2 L4.3 7.2 L7.9 3" stroke="#fff" stroke-width="1.2" fill="none"/></svg>
<div class="b " style="left:167.8px;top:301.71999999999997px;width:7.1px;height:5px;background:#0a0a0a"></div>
<div class="b " style="left:170.9px;top:303.32px;width:1.4px;height:1.8px;background:#4a4a4a"></div>
<div class="t " style="left:177.85px;top:299.8px;height:10.8px;line-height:10.8px;font-size:8.3px;color:#333;letter-spacing:-0.556px">19</div>
<svg style="left:192px;top:301.3px" width="7.4" height="5.6" viewBox="0 0 16 12"><path d="M1 11 L6 3 L9 8 L11 5 L15 11 Z" fill="none" stroke="#a4a4a4" stroke-width="1.5"/></svg>
<svg style="left:199.3px;top:301.0px" width="6.4" height="6.4" viewBox="0 0 12 12"><circle cx="6" cy="6" r="6" fill="#4a4a4a"/><path d="M3 6.2 L5.2 8.4 L9 4" stroke="#fff" stroke-width="1.7" fill="none"/></svg>
<div class="b " style="left:157.4px;top:310.76000000000005px;width:7.9px;height:7.9px;background:#0b64c4;border-radius:1.2px"></div><svg style="left:157.4px;top:310.76000000000005px" width="7.9" height="7.9" viewBox="0 0 10 10"><path d="M2.2 5.2 L4.3 7.2 L7.9 3" stroke="#fff" stroke-width="1.2" fill="none"/></svg>
<div class="b " style="left:167.8px;top:312.11px;width:7.1px;height:5px;background:#0a0a0a"></div>
<div class="b " style="left:170.9px;top:313.71000000000004px;width:1.4px;height:1.8px;background:#4a4a4a"></div>
<div class="t " style="left:177.85px;top:310.2px;height:10.8px;line-height:10.8px;font-size:8.3px;color:#333;letter-spacing:-0.556px">20</div>
<svg style="left:192px;top:311.7px" width="7.4" height="5.6" viewBox="0 0 16 12"><path d="M1 11 L6 3 L9 8 L11 5 L15 11 Z" fill="none" stroke="#a4a4a4" stroke-width="1.5"/></svg>
<svg style="left:199.3px;top:311.4px" width="6.4" height="6.4" viewBox="0 0 12 12"><circle cx="6" cy="6" r="6" fill="#4a4a4a"/><path d="M3 6.2 L5.2 8.4 L9 4" stroke="#fff" stroke-width="1.7" fill="none"/></svg>
<div class="b " style="left:157.4px;top:321.15000000000003px;width:7.9px;height:7.9px;background:#0b64c4;border-radius:1.2px"></div><svg style="left:157.4px;top:321.15000000000003px" width="7.9" height="7.9" viewBox="0 0 10 10"><path d="M2.2 5.2 L4.3 7.2 L7.9 3" stroke="#fff" stroke-width="1.2" fill="none"/></svg>
<div class="b " style="left:167.8px;top:322.5px;width:7.1px;height:5px;background:#0a0a0a"></div>
<div class="b " style="left:170.9px;top:324.1px;width:1.4px;height:1.8px;background:#4a4a4a"></div>
<div class="t " style="left:177.85px;top:320.6px;height:10.8px;line-height:10.8px;font-size:8.3px;color:#333;letter-spacing:-0.556px">21</div>
<svg style="left:192px;top:322.1px" width="7.4" height="5.6" viewBox="0 0 16 12"><path d="M1 11 L6 3 L9 8 L11 5 L15 11 Z" fill="none" stroke="#a4a4a4" stroke-width="1.5"/></svg>
<svg style="left:199.3px;top:321.8px" width="6.4" height="6.4" viewBox="0 0 12 12"><circle cx="6" cy="6" r="6" fill="#4a4a4a"/><path d="M3 6.2 L5.2 8.4 L9 4" stroke="#fff" stroke-width="1.7" fill="none"/></svg>
<div class="b " style="left:157.4px;top:331.54px;width:7.9px;height:7.9px;background:#0b64c4;border-radius:1.2px"></div><svg style="left:157.4px;top:331.54px" width="7.9" height="7.9" viewBox="0 0 10 10"><path d="M2.2 5.2 L4.3 7.2 L7.9 3" stroke="#fff" stroke-width="1.2" fill="none"/></svg>
<div class="b " style="left:167.8px;top:332.89px;width:7.1px;height:5px;background:#0a0a0a"></div>
<div class="b " style="left:170.9px;top:334.49px;width:1.4px;height:1.8px;background:#4a4a4a"></div>
<div class="t " style="left:177.85px;top:331.0px;height:10.8px;line-height:10.8px;font-size:8.3px;color:#333;letter-spacing:-0.556px">22</div>
<svg style="left:192px;top:332.5px" width="7.4" height="5.6" viewBox="0 0 16 12"><path d="M1 11 L6 3 L9 8 L11 5 L15 11 Z" fill="none" stroke="#a4a4a4" stroke-width="1.5"/></svg>
<svg style="left:199.3px;top:332.2px" width="6.4" height="6.4" viewBox="0 0 12 12"><circle cx="6" cy="6" r="6" fill="#4a4a4a"/><path d="M3 6.2 L5.2 8.4 L9 4" stroke="#fff" stroke-width="1.7" fill="none"/></svg>
<div class="b " style="left:157.4px;top:341.93px;width:7.9px;height:7.9px;background:#0b64c4;border-radius:1.2px"></div><svg style="left:157.4px;top:341.93px" width="7.9" height="7.9" viewBox="0 0 10 10"><path d="M2.2 5.2 L4.3 7.2 L7.9 3" stroke="#fff" stroke-width="1.2" fill="none"/></svg>
<div class="b " style="left:167.8px;top:343.28px;width:7.1px;height:5px;background:#0a0a0a"></div>
<div class="b " style="left:170.9px;top:344.88px;width:1.4px;height:1.8px;background:#4a4a4a"></div>
<div class="t " style="left:177.85px;top:341.4px;height:10.8px;line-height:10.8px;font-size:8.3px;color:#333;letter-spacing:-0.556px">23</div>
<svg style="left:192px;top:342.9px" width="7.4" height="5.6" viewBox="0 0 16 12"><path d="M1 11 L6 3 L9 8 L11 5 L15 11 Z" fill="none" stroke="#a4a4a4" stroke-width="1.5"/></svg>
<svg style="left:199.3px;top:342.6px" width="6.4" height="6.4" viewBox="0 0 12 12"><circle cx="6" cy="6" r="6" fill="#4a4a4a"/><path d="M3 6.2 L5.2 8.4 L9 4" stroke="#fff" stroke-width="1.7" fill="none"/></svg>
<div class="b " style="left:157.4px;top:352.32000000000005px;width:7.9px;height:7.9px;background:#0b64c4;border-radius:1.2px"></div><svg style="left:157.4px;top:352.32000000000005px" width="7.9" height="7.9" viewBox="0 0 10 10"><path d="M2.2 5.2 L4.3 7.2 L7.9 3" stroke="#fff" stroke-width="1.2" fill="none"/></svg>
<div class="b " style="left:167.8px;top:353.67px;width:7.1px;height:5px;background:#0a0a0a"></div>
<div class="b " style="left:170.9px;top:355.27000000000004px;width:1.4px;height:1.8px;background:#4a4a4a"></div>
<div class="t " style="left:177.85px;top:351.8px;height:10.8px;line-height:10.8px;font-size:8.3px;color:#333;letter-spacing:-0.556px">24</div>
<svg style="left:192px;top:353.3px" width="7.4" height="5.6" viewBox="0 0 16 12"><path d="M1 11 L6 3 L9 8 L11 5 L15 11 Z" fill="none" stroke="#a4a4a4" stroke-width="1.5"/></svg>
<svg style="left:199.3px;top:353.0px" width="6.4" height="6.4" viewBox="0 0 12 12"><circle cx="6" cy="6" r="6" fill="#4a4a4a"/><path d="M3 6.2 L5.2 8.4 L9 4" stroke="#fff" stroke-width="1.7" fill="none"/></svg>
<div class="b " style="left:165px;top:361.76000000000005px;width:48.6px;height:9.9px;background:#dfdfdf"></div>
<div class="b " style="left:157.4px;top:362.71000000000004px;width:7.9px;height:7.9px;background:#0b64c4;border-radius:1.2px"></div><svg style="left:157.4px;top:362.71000000000004px" width="7.9" height="7.9" viewBox="0 0 10 10"><path d="M2.2 5.2 L4.3 7.2 L7.9 3" stroke="#fff" stroke-width="1.2" fill="none"/></svg>
<div class="b " style="left:167.8px;top:364.06px;width:7.1px;height:5px;background:#0a2a44"></div>
<div class="b " style="left:170.9px;top:365.66px;width:1.4px;height:1.8px;background:#4a4a4a"></div>
<div class="t " style="left:177.85px;top:362.2px;height:10.8px;line-height:10.8px;font-size:8.3px;color:#333;letter-spacing:-0.556px">25</div>
<svg style="left:192px;top:363.7px" width="7.4" height="5.6" viewBox="0 0 16 12"><path d="M1 11 L6 3 L9 8 L11 5 L15 11 Z" fill="none" stroke="#a4a4a4" stroke-width="1.5"/></svg>
<svg style="left:199.3px;top:363.4px" width="6.4" height="6.4" viewBox="0 0 12 12"><circle cx="6" cy="6" r="6" fill="#4a4a4a"/><path d="M3 6.2 L5.2 8.4 L9 4" stroke="#fff" stroke-width="1.7" fill="none"/></svg>
<div class="b " style="left:216.3px;top:97px;width:617.2px;height:20px;background:#efefef;border:1px solid #d4d4d4"></div>
<svg style="left:0;top:0" width="440" height="120" viewBox="0 0 440 120">
<g fill="#cdcdcd"><rect x="280.2" y="99" width="17.2" height="16.8"/><rect x="301.3" y="99" width="16.8" height="16.8"/><rect x="325.6" y="99" width="17.2" height="16.8"/><rect x="381" y="99" width="17" height="16.8"/></g>
<g stroke="#d4d4d4" stroke-width="0.8" stroke-dasharray="1 1"><path d="M236.8 100 V115"/><path d="M258 100 V115"/><path d="M278 100 V115"/><path d="M321.5 100 V115"/><path d="M361.6 100 V115"/><path d="M400 100 V115"/></g>
<!-- home -->
<path d="M220.6 108 L226.3 102.6 L232 108 H230.2 V113 H227.6 V109.6 H225 V113 H222.4 V108Z" fill="#f4f4f4" stroke="#7a7a7a" stroke-width="1.05" stroke-linejoin="round"/>
<!-- layers -->
<path d="M241 108 L247.2 104.2 L253.3 108 L247.2 112 Z" fill="#7a7a7a"/>
<path d="M243 106.8 L249.2 110.7 M245 105.5 L251.2 109.4 M251.2 106.7 L245 110.6 M249.2 105.4 L243 109.4" stroke="#b4b4b4" stroke-width="0.5"/>
<!-- cross tools -->
<g stroke="#a4a4a4" fill="#e6e6e6" stroke-width="0.9"><path d="M262.4 104 L264.6 101.8 L274.4 111.2 L272.2 113.4Z"/><path d="M271.8 101.7 L274.4 104.2 L266 112.4 L262.4 113.4 L263.4 109.8Z"/></g>
<!-- mirror/half -->
<g stroke="#7c7c7c" stroke-width="0.9" fill="none"><path d="M288.6 101 V114.4"/><path d="M290.2 102.2 Q295.4 103.6 295.2 107.8 Q295 112 290.2 113.2Z" fill="#bdbdbd"/><path d="M290.2 105 H294.6 M290.2 107.6 H295.2 M290.2 110.4 H294.6 M292.6 102.8 V112.6"/><path d="M287 102.4 Q283 104 283 107.8 Q283.2 111.6 287 113" stroke-dasharray="1.2 1"/></g>
<!-- ring -->
<circle cx="309.8" cy="107.5" r="5.4" fill="none" stroke="#7c7c7c" stroke-width="1.7"/>
<!-- lasso -->
<g fill="none" stroke="#7c7c7c" stroke-width="1.35"><ellipse cx="334.2" cy="107" rx="5.6" ry="4.3"/><path d="M330.4 110 Q329.2 112.4 331 113.4 M336.6 108.6 l2.2 3.4" stroke-width="0.9"/></g>
<!-- poly lasso -->
<g fill="none" stroke="#8a8a8a" stroke-width="0.95"><path d="M349.2 102.2 L354.4 102.4 L356.8 106.6 L354 111.2 L348.8 111 L346.2 106.8Z"/><path d="M352.4 108.4 L355.8 112.6 M352.4 108.4 v2.6 M352.4 108.4 h2.6" stroke="#6a6a6a"/></g>
<!-- panel w/ arrow -->
<g fill="#ececec" stroke="#bcbcbc" stroke-width="0.8"><path d="M367 102.4 L371.6 103.8 V112 L367 110.2Z"/><path d="M371.6 103.8 L377.2 105.4 V112.4 L371.6 112Z"/></g>
<path d="M370.2 112.4 L372.2 107.6 L371 107.4 L373.6 105.4 L374.2 108.4 L373.2 108 L371.6 112.6Z" fill="#2f8fe6"/>
<!-- two arrows -->
<g fill="#c2c2c2" stroke="#aeaeae" stroke-width="0.8"><path d="M384 103.8 L389 105.6 V112.6 L384 110.4Z"/><path d="M389 105.6 L394 104.4 V111.2 L389 112.6Z"/></g>
<path d="M390.6 106.2 L392.4 102.8 L391.4 102.6 L393.6 101 L394.2 103.6 L393.3 103.3 L391.8 106.4Z M387.6 113.4 L389.6 109.6 L388.4 109.4 L390.8 107.4 L391.4 110.4 L390.5 110 L388.8 113.6Z" fill="#2f8fe6"/>
<!-- focus cube -->
<g fill="#585858"><rect x="406" y="101.6" width="3" height="3"/><rect x="414.8" y="101.6" width="3" height="3"/><rect x="406" y="110.2" width="3" height="3"/><rect x="414.8" y="110.2" width="3" height="3"/></g><g fill="none" stroke="#6a6a6a" stroke-width="0.7"><path d="M407.5 103 H416.3 V111.7 H407.5Z" stroke-dasharray="1.2 1"/></g>
<g fill="none" stroke="#6a6a6a" stroke-width="0.8"><path d="M411.9 104 L415.2 105.6 V109.4 L411.9 111 L408.6 109.4 V105.6Z M408.6 105.6 L411.9 107.2 L415.2 105.6 M411.9 107.2 V111"/></g>
<path d="M419.2 107 h2.2 l-1.1 1.3z" fill="#777"/>
</svg>

<div class="b " style="left:216.9px;top:116.8px;width:615.4px;height:431px;background:linear-gradient(#ababab 0%,#a2a2a2 12%,#8c8c8c 30%,#6a6a6a 50%,#444 70%,#2a2a2a 88%,#1d1d1d 100%)"></div>
<div class="t " style="left:218.55px;top:117.5px;height:7.8px;line-height:7.8px;font-size:6px;color:#f0f0f0;letter-spacing:0.095px">Model:12</div>
<div class="t " style="left:218.55px;top:123.5px;height:7.8px;line-height:7.8px;font-size:6px;color:#f0f0f0;letter-spacing:0.035px">Triangle:0</div>
<div class="t " style="left:218.55px;top:129.6px;height:7.8px;line-height:7.8px;font-size:6px;color:#f0f0f0;letter-spacing:-0.092px">Vertex:5313956</div>
<div class="t " style="left:218.55px;top:135.6px;height:7.8px;line-height:7.8px;font-size:6px;color:#f0f0f0;letter-spacing:0.056px">Selected:0/0</div>
<div class="t " style="left:819.50px;top:119.0px;height:14px;line-height:14px;font-size:13px;color:#fff;font-weight:bold">?</div>
<svg style="left:0;top:0" width="1024" height="576" viewBox="0 0 1024 576">
<defs>
<radialGradient id="ah" cx="0.58" cy="0.52" r="0.62"><stop offset="0" stop-color="#0a86be"/><stop offset="0.5" stop-color="#097bb0"/><stop offset="0.8" stop-color="#07679a"/><stop offset="1" stop-color="#05456a"/></radialGradient>
<radialGradient id="av" cx="0.80" cy="0.38" r="0.8"><stop offset="0" stop-color="#14a6ec"/><stop offset="0.14" stop-color="#0d90cc"/><stop offset="0.4" stop-color="#0a7db2"/><stop offset="1" stop-color="#08709f"/></radialGradient>
<radialGradient id="ab" cx="0.5" cy="0.4" r="0.65"><stop offset="0" stop-color="#0b8ac4"/><stop offset="0.6" stop-color="#0979ae"/><stop offset="1" stop-color="#05527a"/></radialGradient>
<linearGradient id="abody" x1="0" y1="0" x2="1" y2="0.25"><stop offset="0" stop-color="#086c9e"/><stop offset="0.35" stop-color="#0a7eb4"/><stop offset="0.62" stop-color="#0c8cc8"/><stop offset="0.85" stop-color="#0978ac"/><stop offset="1" stop-color="#065a86"/></linearGradient>
<linearGradient id="agr" x1="0" y1="0" x2="1" y2="0"><stop offset="0" stop-color="#4aa878" stop-opacity="0"/><stop offset="0.45" stop-color="#4aa878" stop-opacity="0.75"/><stop offset="1" stop-color="#4aa878" stop-opacity="0"/></linearGradient>
<filter id="bl2" x="-30%" y="-30%" width="160%" height="160%"><feGaussianBlur stdDeviation="2.2"/></filter>
<filter id="bl4" x="-30%" y="-30%" width="160%" height="160%"><feGaussianBlur stdDeviation="4"/></filter>
<clipPath id="avc"><ellipse cx="515" cy="309.5" rx="45.5" ry="48.5" transform="rotate(-14 515 309.5)"/></clipPath>
<clipPath id="ahc"><ellipse cx="531" cy="293.5" rx="69.5" ry="60.5" transform="rotate(8 531 293.5)"/></clipPath>
<clipPath id="abc"><path d="M462 372 Q470 352 490 348 L560 352 Q570 372 569 398 Q566 420 545 426 L520 425 Q482 418 466 407 Q456 392 462 372Z"/></clipPath>
</defs>
<!-- left raised arm -->
<path d="M446.5 333 Q445.5 320.5 454.5 319.5 Q462.5 320 464 331 L478 362 L461 374 Q450 350 446.5 333Z" fill="url(#ab)"/>
<path d="M447.5 336.5 Q456 339.5 464.5 334" stroke="#065680" stroke-width="1" fill="none"/>
<!-- feet -->
<ellipse cx="471" cy="415" rx="15.5" ry="11.5" transform="rotate(22 471 415)" fill="url(#ab)"/>
<ellipse cx="469" cy="419" rx="8" ry="4.6" transform="rotate(28 469 419)" fill="#3c9c88" opacity="0.75" filter="url(#bl2)"/>
<ellipse cx="547.5" cy="431" rx="24.5" ry="12" transform="rotate(-6 547.5 431)" fill="url(#ab)"/>
<!-- right arm -->
<path d="M563 364 Q576 361 583 373 Q592 392 589.5 402 Q588 410 578 409 Q569 408 566 399Z" fill="url(#ab)"/>
<path d="M567.5 397 Q578 401 589.5 395" stroke="#065680" stroke-width="1" fill="none"/>
<!-- body -->
<path d="M462 372 Q470 352 490 348 L560 352 Q570 372 569 398 Q566 420 545 426 L520 425 Q482 418 466 407 Q456 392 462 372Z" fill="url(#abody)"/>
<g clip-path="url(#abc)">
<path d="M464 352 Q515 384 570 352 L570 362 Q515 394 462 366Z" fill="#03324e" opacity="0.7" filter="url(#bl2)"/>
<path d="M460 404 Q490 422 545 430 L575 420 L572 396 Q562 416 540 417 Q500 414 462 392Z" fill="#04405e" opacity="0.6" filter="url(#bl2)"/>
<path d="M468 368 Q482 360 498 364 L496 374 Q480 370 470 378Z" fill="#46a486" opacity="0.7" filter="url(#bl2)"/>
</g>
<!-- chest panel -->
<path d="M478 366 Q474 366.5 473.3 371 L471 393 Q471 397 475 398.5 L528 414.5 Q533.5 415.5 534.5 410.5 L539.5 383.5 Q540 379.5 536 378.5 Z" fill="#0a78ae" stroke="#055078" stroke-width="1.3"/>
<path d="M475 385 L505 392 L503 408 L476 399Z" fill="#3c9c82" opacity="0.5" filter="url(#bl2)"/>
<circle cx="486.3" cy="374.2" r="4.3" fill="#04121c"/>
<circle cx="503" cy="379" r="3.8" fill="#075d8c" stroke="#054a72" stroke-width="1"/>
<circle cx="521.3" cy="382" r="4.4" fill="#04121c"/>
<g stroke="#055680" stroke-width="1.2" fill="#0b86c0">
<rect x="479.3" y="385.2" width="4.8" height="16" rx="2.4" transform="rotate(-6 481.6 392.7)"/>
<rect x="488.3" y="388.2" width="4.8" height="16" rx="2.4" transform="rotate(-6 490.6 395.7)"/>
<rect x="497.6" y="391.2" width="4.8" height="16" rx="2.4" transform="rotate(-6 499.9 398.7)"/>
</g>
<circle cx="519" cy="402.5" r="6.6" fill="#0a80b8" stroke="#065a86" stroke-width="1.1"/>
<!-- ears -->
<ellipse cx="460.5" cy="290" rx="5.2" ry="12.8" fill="#07679a"/>
<!-- head -->
<ellipse cx="531" cy="293.5" rx="69.5" ry="60.5" transform="rotate(8 531 293.5)" fill="url(#ah)"/>
<g clip-path="url(#ahc)">
<path d="M488 242 Q540 218 596 264 L580 272 Q545 244 498 252Z" fill="#02263c" opacity="0.85" filter="url(#bl2)"/>
<path d="M456 270 Q468 240 500 232 L506 246 Q478 258 470 300Z" fill="#043c5a" opacity="0.5" filter="url(#bl2)"/>
<ellipse cx="578" cy="300" rx="12" ry="22" fill="#0c90cc" opacity="0.55" filter="url(#bl4)"/>
<g stroke="#02101a" stroke-width="3.4" fill="none" stroke-linecap="round">
<path d="M508.5 240.5 L520.7 238.7" opacity="0.5"/><path d="M516.7 239.4 L528.9 237.2" opacity="0.8"/><path d="M525.0 240.4 L537.0 237.4" opacity="1"/><path d="M534.5 242.7 L546.3 238.9" opacity="1"/><path d="M542.9 246.1 L554.3 241.5" opacity="1"/><path d="M550.7 250.4 L561.7 244.8" opacity="1"/><path d="M557.9 255.8 L568.5 249.2" opacity="1"/><path d="M565.0 262.2 L574.8 254.6" opacity="1"/>
</g>
</g>
<ellipse cx="595.5" cy="320" rx="9.8" ry="15.6" transform="rotate(-10 595.5 320)" fill="#07679a"/>
<ellipse cx="596.3" cy="320" rx="7.6" ry="13" transform="rotate(-10 596.3 320)" fill="#0a80b8"/>
<ellipse cx="597" cy="319.5" rx="4.6" ry="8.5" transform="rotate(-10 597 319.5)" fill="#0c90cc" filter="url(#bl2)"/>
<!-- visor -->
<ellipse cx="515" cy="309.5" rx="48.5" ry="51.5" transform="rotate(-14 515 309.5)" fill="#054c74"/>
<ellipse cx="515" cy="309.5" rx="45.5" ry="48.5" transform="rotate(-14 515 309.5)" fill="url(#av)"/>
<g clip-path="url(#avc)">
<rect x="476" y="258" width="38" height="108" fill="url(#agr)" transform="rotate(7 495 312)"/>
<path d="M468 300 Q470 340 500 362" stroke="#04405e" stroke-width="5" fill="none" opacity="0.5" filter="url(#bl2)"/>
<path d="M557 288 Q567 320 549 350" stroke="#03141e" stroke-width="2" fill="none"/>
</g>
</svg>

<svg style="left:0;top:0" width="320" height="576" viewBox="0 0 320 576">
<path d="M278.4 505.3 L275.4 526" stroke="#2bb33a" stroke-width="0.9"/>
<path d="M274 524.5 L277.2 525 L275 529.6Z" fill="#3fd24a"/>
<path d="M278.4 505.3 L297 506.8" stroke="#c82020" stroke-width="0.9"/>
<path d="M295.6 505 L300.4 507.2 L295.3 508.8Z" fill="#e22a2a"/>
<path d="M278.4 505.3 L288 506.6" stroke="#2030d0" stroke-width="0.9"/>
<path d="M286.4 505 L290.6 506.9 L286.2 508.4Z" fill="#2a3cf0"/>
</svg>

<div class="t " style="left:290.00px;top:498.1px;height:8.5px;line-height:8.5px;font-size:6.5px;color:#c8c8c8;font-weight:bold">z</div>
<div class="t " style="left:297.50px;top:498.1px;height:8.5px;line-height:8.5px;font-size:6.5px;color:#e0e0e0;font-weight:bold">x</div>
<div class="t " style="left:276.80px;top:515.6px;height:7.8px;line-height:7.8px;font-size:6px;color:#9a9a9a;font-weight:bold">y</div>
<div class="b " style="left:837.2px;top:103.5px;width:186.8px;height:84px;border-left:1px solid #dcdcdc"></div>
<div class="t " style="left:841.25px;top:98.8px;height:10.3px;line-height:10.3px;font-size:7.9px;color:#1c1c1c;letter-spacing:-0.200px">Parameters</div>
<div class="t " style="left:854.95px;top:110.5px;height:10.3px;line-height:10.3px;font-size:7.9px;color:#1c1c1c;letter-spacing:-0.115px">Camera preview</div>
<div class="t " style="left:854.95px;top:123.8px;height:10.3px;line-height:10.3px;font-size:7.9px;color:#1c1c1c;letter-spacing:0.082px">Projection pattern</div>
<div class="t " style="left:854.95px;top:136.3px;height:10.3px;line-height:10.3px;font-size:7.9px;color:#1c1c1c;letter-spacing:-0.109px">Camera brightness(ms)</div>
<div class="t " style="left:854.95px;top:149.2px;height:10.3px;line-height:10.3px;font-size:7.9px;color:#1c1c1c;letter-spacing:0.010px">Projection brightness</div>
<div class="t " style="left:854.95px;top:162.1px;height:10.3px;line-height:10.3px;font-size:7.9px;color:#1c1c1c;letter-spacing:0.043px">Projection clarity</div>
<div class="b " style="left:935.7px;top:108.6px;width:68.6px;height:12.4px;background:#b4623b;border:1px dashed #dc9474"></div>
<div class="t " style="left:961.65px;top:110.0px;height:10.1px;line-height:10.1px;font-size:7.8px;color:#430c05;letter-spacing:0.129px">Stop</div>
<div class="b btn" style="left:936px;top:122.5px;width:17px;height:12px;"></div>
<div class="b " style="left:939.8px;top:124.4px;width:8px;height:7.8px;background:#000"></div>
<div class="b btn" style="left:954.5px;top:122.5px;width:15px;height:12px;"></div>
<div class="b " style="left:956px;top:124.2px;width:11px;height:8px;background:#fff"></div>
<div class="b btn" style="left:972px;top:122.5px;width:16px;height:12px;"></div>
<div class="b " style="left:973.9px;top:128px;width:9px;height:1px;background:#333"></div>
<div class="b " style="left:977.9px;top:124px;width:1px;height:9px;background:#333"></div>
<div class="b btn" style="left:989.5px;top:122.5px;width:13.5px;height:12px;"></div>
<div class="b " style="left:990.8px;top:124px;width:10.2px;height:9px;background:#707070"></div>
<div class="b cb" style="left:936px;top:135.3px;width:41.3px;height:11.2px;"></div><div class="t " style="left:937.45px;top:136.2px;height:10.3px;line-height:10.3px;font-size:7.9px;color:#1c1c1c;letter-spacing:-0.098px">16.667</div><div class="t " style="left:972.10px;top:139.1px;height:4.4px;line-height:4.4px;font-size:3.4px;color:#777;">&#9662;</div>
<svg style="left:980.1px;top:136.7px" width="8.4" height="8.4" viewBox="0 0 16 16"><circle cx="8" cy="8" r="7" fill="#f4f4f4" stroke="#555" stroke-width="1.3"/><path d="M4.5 8H11.5M8 4.5V11.5" stroke="#555" stroke-width="1.3"/></svg>
<svg style="left:993.5px;top:136.7px" width="8.4" height="8.4" viewBox="0 0 16 16"><circle cx="8" cy="8" r="7" fill="#f4f4f4" stroke="#555" stroke-width="1.3"/><path d="M4.5 8H11.5" stroke="#555" stroke-width="1.3"/></svg>
<div class="b " style="left:936px;top:153.5px;width:41px;height:1px;background:#dfdfdf"></div><div class="b " style="left:965px;top:149.5px;width:6px;height:9px;background:#0b78d6;border-radius:1px"></div>
<div class="b cb" style="left:980.6px;top:148.8px;width:23.8px;height:10.9px;"></div>
<div class="t " style="left:982.25px;top:149.6px;height:10.3px;line-height:10.3px;font-size:7.9px;color:#1c1c1c;letter-spacing:0.212px">75</div>
<div class="b " style="left:936px;top:161px;width:19.5px;height:12px;background:#efefef;border:1px solid #d4d4d4"></div>
<div class="t " style="left:941.00px;top:161.8px;height:9.6px;line-height:9.6px;font-size:7.4px;color:#333;letter-spacing:0.6px">&lt;&lt;</div>
<div class="b " style="left:957px;top:161px;width:19.5px;height:12px;background:#efefef;border:1px solid #d4d4d4"></div>
<div class="t " style="left:962.00px;top:161.8px;height:9.6px;line-height:9.6px;font-size:7.4px;color:#333;letter-spacing:0.6px">&gt;&gt;</div>
<div class="b " style="left:875.5px;top:178.5px;width:5px;height:5px;background:#fafafa;border:1px solid #d2d2d2;border-radius:0.6px"></div><svg style="left:875.5px;top:178.5px" width="5" height="5" viewBox="0 0 10 10"><path d="M2.4 5.2 L4.3 7 L7.6 3.2" stroke="#a8a8a8" stroke-width="1.1" fill="none"/></svg>
<div class="t " style="left:883.85px;top:176.1px;height:10.3px;line-height:10.3px;font-size:7.9px;color:#1c1c1c;letter-spacing:-0.219px">Crosshair</div>
<div class="b " style="left:921.3px;top:178.3px;width:5.4px;height:5.4px;background:#fff;border:1px solid #dedede;border-radius:0.8px"></div>
<div class="t " style="left:929.55px;top:176.1px;height:10.3px;line-height:10.3px;font-size:7.9px;color:#1c1c1c;letter-spacing:-0.028px">Camera clarity</div>
<svg style="left:0;top:0" width="1024" height="576" viewBox="0 0 1024 576">
<defs>
<linearGradient id="ctop" x1="0" y1="0" x2="0" y2="1"><stop offset="0" stop-color="#1f1f1f"/><stop offset="0.5" stop-color="#2a2a2a"/><stop offset="1" stop-color="#3b3b3b"/></linearGradient>
<linearGradient id="cbot" x1="0" y1="0" x2="0" y2="1"><stop offset="0" stop-color="#9c9c9c"/><stop offset="1" stop-color="#bcbcbc"/></linearGradient>
<radialGradient id="gh" cx="0.42" cy="0.38" r="0.62"><stop offset="0" stop-color="#d8d8d8"/><stop offset="0.6" stop-color="#b4b4b4"/><stop offset="0.86" stop-color="#858585"/><stop offset="1" stop-color="#484848"/></radialGradient>
<radialGradient id="gv" cx="0.45" cy="0.35" r="0.7"><stop offset="0" stop-color="#c4c4c4"/><stop offset="0.7" stop-color="#a2a2a2"/><stop offset="1" stop-color="#7c7c7c"/></radialGradient>
<radialGradient id="gb" cx="0.45" cy="0.4" r="0.65"><stop offset="0" stop-color="#dcdcdc"/><stop offset="0.65" stop-color="#b0b0b0"/><stop offset="1" stop-color="#6a6a6a"/></radialGradient>
<clipPath id="c1"><rect x="837.3" y="188" width="184.7" height="180"/></clipPath>
<clipPath id="c2"><rect x="837.3" y="369.5" width="184.7" height="179"/></clipPath>
</defs>
<!-- cam 1 -->
<g clip-path="url(#c1)">
<rect x="837" y="188" width="186" height="31" fill="url(#ctop)"/>
<rect x="837" y="218.6" width="186" height="118" fill="#0000fe"/>
<rect x="837" y="336.2" width="186" height="32" fill="url(#cbot)"/>
<rect x="837" y="335.8" width="186" height="0.9" fill="#5a7a8a"/>
<path d="M918.7 218.5 L913.5 234" stroke="#3a3a4a" stroke-width="1.2" fill="none"/>
<!-- arms / feet / body -->
<path d="M892.8 283.5 L900 296" stroke="#8c8c8c" stroke-width="8" stroke-linecap="round" fill="none"/><path d="M893 283.6 L900 295.6" stroke="#c6c6c6" stroke-width="5" stroke-linecap="round" fill="none"/><path d="M892.8 283.2 L899 294" stroke="#dcdcdc" stroke-width="2.2" stroke-linecap="round" fill="none"/>
<ellipse cx="947.5" cy="296" rx="4.5" ry="8.5" transform="rotate(-18 947.5 296)" fill="url(#gb)"/>
<ellipse cx="906.5" cy="316.5" rx="7.5" ry="4.8" fill="url(#gb)"/>
<ellipse cx="936" cy="316.8" rx="8" ry="4.6" fill="url(#gb)"/>
<path d="M897 290 Q897 282 908 282 L934 282 Q944 283 945 294 L943 311 Q941 317 933 317 L906 317 Q898 316 897.5 308 Z" fill="url(#gb)"/>
<rect x="901.5" y="293.5" width="28.5" height="18" rx="3.5" fill="#9a9a9a" stroke="#7a7a7a" stroke-width="0.8"/>
<circle cx="907.5" cy="299.5" r="2.1" fill="#0010e8"/><circle cx="915.3" cy="299.8" r="2.1" fill="#20202c"/><circle cx="923.4" cy="299.6" r="2.1" fill="#0010e8"/>
<rect x="905" y="304" width="2" height="5.5" rx="1" fill="#c4c4c4"/><rect x="908.6" y="304" width="2" height="5.5" rx="1" fill="#c4c4c4"/><rect x="912.2" y="304" width="2" height="5.5" rx="1" fill="#c4c4c4"/>
<!-- ears/head -->
<ellipse cx="949" cy="263.5" rx="3.6" ry="8.2" fill="url(#gb)"/>
<ellipse cx="889.3" cy="264" rx="2" ry="6" fill="#8a8a8a"/>
<ellipse cx="918.5" cy="263" rx="29.2" ry="27.4" fill="url(#gh)"/>
<ellipse cx="912.5" cy="266" rx="22.3" ry="23.2" fill="url(#gv)"/>
<path d="M928 243 Q941 262 927 286" stroke="#1a2ad0" stroke-width="0.9" fill="none"/>
<path d="M890.5 277 Q912 274 936 277" stroke="#6a6a6a" stroke-width="0.9" fill="none"/>
<path d="M915 236 Q913 270 921 318" stroke="#4a4a58" stroke-width="0.9" fill="none"/>
<path d="M909 237 l1-3.5 l1 3.5 M914 236 l1-4 l1 4 M919 236 l1-4 l1 4 M924 237 l1-4 l1 4 M929 238.5 l1-4 l1 4 M934 241 l1.2-3.6 l0.8 4" stroke="#4a4a4a" stroke-width="1" fill="#4a4a4a"/>
<ellipse cx="920" cy="259.2" rx="2.1" ry="2.8" transform="rotate(-20 920 259.2)" fill="#f00010"/>
<g fill="#f01020"><circle cx="893" cy="284" r="0.9"/><circle cx="895" cy="288.5" r="0.8"/><circle cx="905" cy="317.5" r="1.3"/><circle cx="909" cy="318.5" r="1"/><circle cx="933" cy="318.8" r="1.2"/><circle cx="937.5" cy="318.2" r="1"/><circle cx="926" cy="292.5" r="0.8"/><circle cx="929" cy="294" r="0.7"/><circle cx="945" cy="300" r="0.7"/></g>
<rect x="929.2" y="188" width="0.9" height="180" fill="#e0182a" opacity="0.62"/>
<rect x="837" y="277" width="186" height="0.9" fill="#d01848" opacity="0.6"/>
</g>
<!-- cam 2 -->
<g clip-path="url(#c2)">
<rect x="837" y="369.5" width="186" height="31" fill="url(#ctop)"/>
<rect x="837" y="400" width="186" height="117" fill="#0000fe"/>
<rect x="837" y="516.6" width="186" height="33" fill="url(#cbot)"/>
<rect x="837" y="516.2" width="186" height="0.9" fill="#5a7a8a"/>
<path d="M837 425 L853 400" stroke="#40484a" stroke-width="1.3" fill="none"/>
<path d="M916 407.5 L938 412 M921 409 l8 0.5" stroke="#202048" stroke-width="0.9" fill="none"/>
<path d="M900.5 460 L913 479" stroke="#8c8c8c" stroke-width="8.6" stroke-linecap="round" fill="none"/><path d="M900.8 460 L913 478.6" stroke="#c6c6c6" stroke-width="5.4" stroke-linecap="round" fill="none"/><path d="M900.6 459.6 L912 477" stroke="#dcdcdc" stroke-width="2.4" stroke-linecap="round" fill="none"/>
<ellipse cx="957.2" cy="480" rx="4" ry="8" transform="rotate(-12 957.2 480)" fill="url(#gb)"/>
<ellipse cx="914.5" cy="497.8" rx="7.8" ry="5" fill="url(#gb)"/>
<ellipse cx="944.5" cy="499" rx="8" ry="4.6" fill="url(#gb)"/>
<path d="M908 476 Q908 466 918 466 L946 466 Q955 467 955.5 478 L954 493 Q952 499.5 944 499.5 L916 499.5 Q909 498.5 908.5 491 Z" fill="url(#gb)"/>
<rect x="916.5" y="476.3" width="34" height="18.3" rx="3.8" fill="#9c9c9c" stroke="#7c7c7c" stroke-width="0.8"/>
<circle cx="925" cy="481" r="2.1" fill="#0010e8"/><circle cx="934.5" cy="481.5" r="2.1" fill="#18181e"/><circle cx="942.5" cy="481.3" r="2.1" fill="#0010e8"/>
<rect x="923" y="486" width="2.2" height="6" rx="1" fill="#c4c4c4"/><rect x="927" y="486" width="2.2" height="6" rx="1" fill="#c4c4c4"/><rect x="931" y="486" width="2.2" height="6" rx="1" fill="#c4c4c4"/><circle cx="943" cy="489.5" r="2.5" fill="#b8b8b8"/>
<ellipse cx="904.6" cy="442.5" rx="3" ry="7.2" fill="url(#gb)"/>
<ellipse cx="967" cy="448.5" rx="2.4" ry="6.8" fill="#8e8e8e"/>
<ellipse cx="937" cy="445" rx="30.2" ry="27.2" fill="url(#gh)"/>
<ellipse cx="936" cy="449.5" rx="20.5" ry="21" fill="url(#gv)"/>
<path d="M924 432 Q910 450 922 468" stroke="#1a2ad0" stroke-width="0.9" fill="none"/>
<path d="M908 458.5 Q936 455 965 458.5" stroke="#6a6a6a" stroke-width="0.9" fill="none"/>
<path d="M946 420 Q948 460 939 500" stroke="#4a4a58" stroke-width="0.9" fill="none"/>
<path d="M922 421.5 l1-3.5 l1 3.5 M927 420 l1-4 l1 4 M932 419.3 l1-4 l1 4 M937 419 l1-4 l1 4 M942 419.6 l1-4 l1 4 M947 421 l1-4 l1 4 M952 423.5 l1.2-3.6 l0.8 4" stroke="#4a4a4a" stroke-width="1" fill="#4a4a4a"/>
<ellipse cx="939" cy="440.8" rx="3.4" ry="3" fill="#f00010"/>
<g fill="#f01020"><circle cx="901" cy="460" r="1"/><circle cx="904.5" cy="465.5" r="1.4"/><circle cx="915" cy="498.5" r="1.5"/><circle cx="918.5" cy="499.5" r="1"/><circle cx="945" cy="500.2" r="1.3"/><circle cx="949" cy="499.6" r="1"/><circle cx="957" cy="478" r="0.7"/><circle cx="944" cy="475" r="0.7"/></g>
<rect x="929.8" y="369.5" width="0.9" height="180" fill="#e0182a" opacity="0.62"/>
<rect x="837" y="459" width="186" height="0.9" fill="#d01848" opacity="0.6"/>
</g>
<!-- cam overlay icons -->
<g stroke="#f4f4f4" fill="none" stroke-width="1.1">
<circle cx="846" cy="192.6" r="2.2"/><path d="M847.7 194.3 L850 196.6"/>
<circle cx="846" cy="373.6" r="2.2"/><path d="M847.7 375.3 L850 377.6"/>
</g>
<path d="M850.2 192.4 h3.4 l-1.7 1.8z M850.2 373.4 h3.4 l-1.7 1.8z" fill="#080808"/>
<path d="M1014 191.5 l3.5 0 l0 1 l-0.6 0 l0.3 2 l1 0.8 l-2.3 0 l-0.2 2.3 l-0.3 0 l-0.2 -2.3 l-2.3 0 l1 -0.8 l0.3 -2 l-0.6 0z" fill="#f0f0f0" transform="translate(-0.8 -1.2) rotate(35 1015.7 194.5)"/>
<path d="M1014 372 l3.5 0 l0 1 l-0.6 0 l0.3 2 l1 0.8 l-2.3 0 l-0.2 2.3 l-0.3 0 l-0.2 -2.3 l-2.3 0 l1 -0.8 l0.3 -2 l-0.6 0z" fill="#f0f0f0" transform="translate(-0.8 -1.4) rotate(35 1015.7 375)"/>
</svg>

<div class="b " style="left:-8px;top:548.4px;width:1040px;height:13px;background:#f0f0f0"></div>
<div class="t " style="left:0.85px;top:550.9px;height:9.9px;line-height:9.9px;font-size:7.6px;color:#222;letter-spacing:0.071px">Total 25 itemsSelected 1 items</div>
<div class="b " style="left:-8px;top:561.2px;width:1040px;height:22.8px;background:#222"></div>
</div></div></body></html>
